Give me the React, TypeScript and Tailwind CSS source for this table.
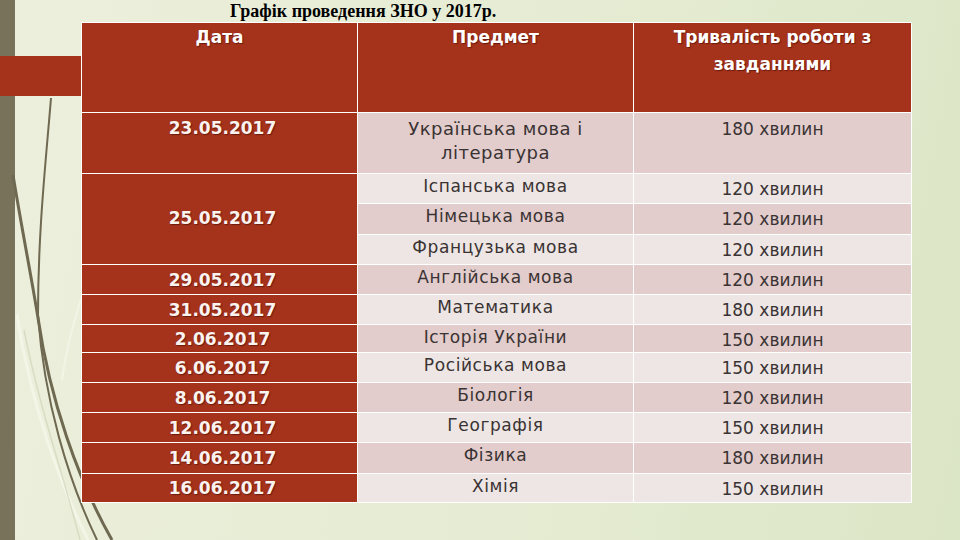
import React from "react";

type Row = { subject: string; duration: string; shade: "pink" | "light" };

const RIGHT_ROWS: Row[] = [
  { subject: "Іспанська мова", duration: "120 хвилин", shade: "light" },
  { subject: "Німецька мова", duration: "120 хвилин", shade: "pink" },
  { subject: "Французька мова", duration: "120 хвилин", shade: "light" },
  { subject: "Англійська мова", duration: "120 хвилин", shade: "pink" },
  { subject: "Математика", duration: "180 хвилин", shade: "light" },
  { subject: "Історія України", duration: "150 хвилин", shade: "pink" },
  { subject: "Російська мова", duration: "150 хвилин", shade: "light" },
  { subject: "Біологія", duration: "120 хвилин", shade: "pink" },
  { subject: "Географія", duration: "150 хвилин", shade: "light" },
  { subject: "Фізика", duration: "180 хвилин", shade: "pink" },
  { subject: "Хімія", duration: "150 хвилин", shade: "light" },
];

const DATES = [
  "29.05.2017",
  "31.05.2017",
  "2.06.2017",
  "6.06.2017",
  "8.06.2017",
  "12.06.2017",
  "14.06.2017",
  "16.06.2017",
];

const font = "font-['DejaVu_Sans',sans-serif]";
const shadow = "[text-shadow:1px_1px_1px_rgba(60,10,0,0.55)]";

function Wisps() {
  return (
    <svg
      className="absolute left-0 top-0 h-[540px] w-[140px]"
      viewBox="0 0 140 540"
      fill="none"
    >
      <path d="M17 315 C30 400 58 480 88 540" stroke="#f6f8ec" strokeOpacity="0.7" strokeWidth="3" />
      <path d="M62 380 C66 350 74 320 82 296" stroke="#f6f8ec" strokeOpacity="0.6" strokeWidth="2" />
      <path d="M24 330 C40 410 62 470 80 540" stroke="#c9d2b4" strokeOpacity="0.6" strokeWidth="1.5" />
      <path d="M51 98 C46 160 38 230 38 315 C44 400 68 480 97 540" stroke="#6e6950" strokeWidth="2" />
      <path d="M13 175 C22 230 32 280 38 318 C50 400 78 480 112 540" stroke="#6e6950" strokeWidth="3" />
    </svg>
  );
}

export default function App() {
  return (
    <div className="relative flex h-[540px] w-[960px] overflow-hidden bg-[linear-gradient(100deg,#ecefdc_0%,#e6ecd3_55%,#dbe6c6_100%)]">
      {/* left theme decoration */}
      <div className="relative w-[81px] shrink-0">
        <div className="absolute left-0 top-0 h-full w-[15px] bg-[#78725b]" />
        <Wisps />
        <div className="relative mt-[56px] h-[40px] w-[81px] bg-[#a5321a]" />
      </div>

      <div className="relative z-10 flex flex-col">
        <div className="h-[22px] whitespace-nowrap pl-[149px] pt-[1px] font-['Liberation_Serif',serif] text-[18px] font-bold leading-[21px] text-black">
          Графік проведення ЗНО у 2017р.
        </div>

        <div
          className={`grid w-[831px] grid-cols-[275px_275px_277px] grid-rows-[89px_60px_29px_30px_29px_29px_29px_27px_29px_29px_29px_30px_28px] gap-px border border-white bg-white ${font}`}
        >
          {/* header */}
          <div className={`bg-[#a5321a] pt-[1px] text-center text-[17px] font-bold leading-[27px] text-white ${shadow}`}>
            Дата
          </div>
          <div className={`bg-[#a5321a] pt-[1px] text-center text-[17px] font-bold leading-[27px] text-white ${shadow}`}>
            Предмет
          </div>
          <div className={`bg-[#a5321a] pt-[1px] text-center text-[17px] font-bold leading-[27px] text-white ${shadow}`}>
            Тривалість роботи з
            <br />
            завданнями
          </div>

          {/* first row */}
          <div className={`bg-[#a5321a] pl-[6px] pt-[4px] text-center text-[17px] font-bold leading-[22px] text-[#fbf3f0] ${shadow}`}>
            23.05.2017
          </div>
          <div className="bg-[#e2cccc] pt-[4px] text-center text-[18px] leading-[24px] tracking-[0.5px] text-[#3a3333]">
            Українська мова і
            <br />
            література
          </div>
          <div className="bg-[#e2cccc] pt-[5px] text-center text-[17px] leading-[22px] text-[#3a3333]">
            180 хвилин
          </div>

          {/* merged date */}
          <div
            className={`row-span-3 flex items-center justify-center bg-[#a5321a] pl-[6px] text-[17px] font-bold text-[#fbf3f0] ${shadow}`}
            style={{ gridColumn: 1 }}
          >
            25.05.2017
          </div>

          {RIGHT_ROWS.map((r, i) => {
            const bg = r.shade === "pink" ? "bg-[#e2cccc]" : "bg-[#ede6e4]";
            const date = i >= 3 ? DATES[i - 3] : null;
            return (
              <React.Fragment key={r.subject}>
                {date && (
                  <div className={`flex items-center justify-center bg-[#a5321a] pl-[6px] text-[17px] font-bold leading-[22px] text-[#fbf3f0] ${shadow}`}>
                    {date}
                  </div>
                )}
                <div className={`${bg} pt-[1px] text-center text-[17px] leading-[22px] tracking-[0.6px] text-[#3a3333]`}>
                  {r.subject}
                </div>
                <div className={`${bg} pt-[3px] text-center text-[17px] leading-[24px] text-[#3a3333]`}>
                  {r.duration}
                </div>
              </React.Fragment>
            );
          })}
        </div>
      </div>
    </div>
  );
}
